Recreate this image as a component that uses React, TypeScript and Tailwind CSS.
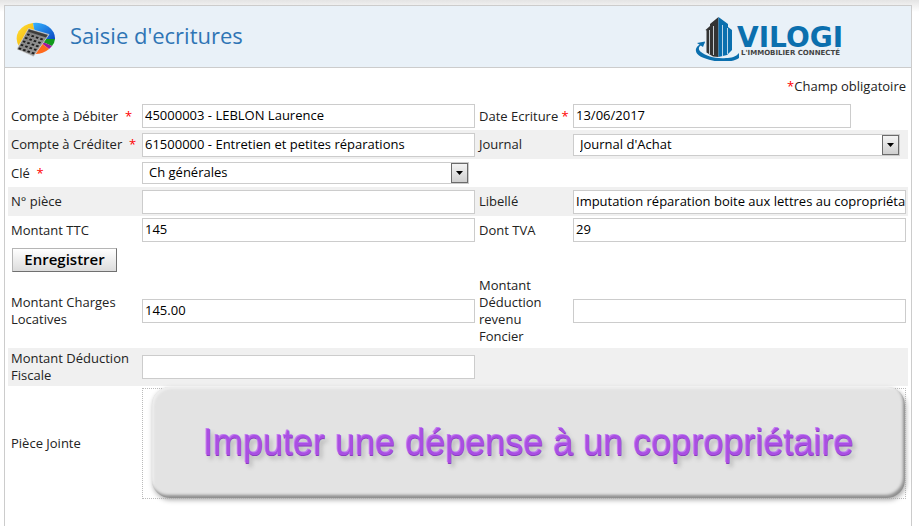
import type { ReactNode } from "react";

const field =
  "block w-full border border-[#cccccc] bg-white pl-[2px] pb-[2px] text-[13px] text-black outline-none";

function Star() {
  return <span className="text-[#ff0000]">*</span>;
}

function Row({ children, striped = false, className = "h-7" }: { children: ReactNode; striped?: boolean; className?: string }) {
  return (
    <div
      className={`grid grid-cols-[134px_minmax(0,1fr)_98px_minmax(0,1fr)] items-center pr-[2px] ${
        striped ? "bg-[#f0f0f0]" : ""
      } ${className}`}
    >
      {children}
    </div>
  );
}

function Label({ id, children, second = false }: { id: string; children: ReactNode; second?: boolean }) {
  return (
    <label htmlFor={id} className={`leading-[17px] text-[#222222] ${second ? "pl-1" : "pl-[3px]"}`}>
      {children}
    </label>
  );
}

function Text({ id, value = "", className = "h-6" }: { id: string; value?: string; className?: string }) {
  return <input id={id} type="text" defaultValue={value} className={`${field} ${className}`} />;
}

function Select({ id, value }: { id: string; value: string }) {
  return (
    <div className="relative mr-[6px]">
      <select
        id={id}
        className="block h-[22px] w-full appearance-none border border-[#cccccc] bg-white pb-[2px] pl-[6px] text-[13px] text-black outline-none"
      >
        <option>{value}</option>
      </select>
      <span className="pointer-events-none absolute top-px right-px flex h-5 w-[17px] items-center justify-center border border-[#6b6b6b] bg-linear-to-b from-[#f4f4f4] to-[#cfcfcf]">
        <svg width="7" height="4" viewBox="0 0 7 4">
          <path d="M0 0h7L3.5 4z" fill="#000" />
        </svg>
      </span>
    </div>
  );
}

function AccountingIcon() {
  const keys = [0, 1, 2, 3, 4].flatMap((r) => [0, 1, 2, 3].map((c) => [r, c]));
  return (
    <svg width="40" height="40" viewBox="0 -4 40 40" aria-hidden="true">
      <defs>
        <linearGradient id="yellow" x1="0" y1="0" x2="1" y2="1">
          <stop offset="0" stopColor="#ffe23a" />
          <stop offset="1" stopColor="#f2a900" />
        </linearGradient>
        <linearGradient id="blue" x1="0" y1="0" x2="1" y2="1">
          <stop offset="0" stopColor="#35b4ff" />
          <stop offset="1" stopColor="#0a49c4" />
        </linearGradient>
        <linearGradient id="body" x1="0" y1="0" x2="1" y2="1">
          <stop offset="0" stopColor="#666" />
          <stop offset="1" stopColor="#a5a5a5" />
        </linearGradient>
      </defs>
      <path d="M17 2A18.500 15.500 0 0 0 3 25L20 18z" fill="url(#yellow)" />
      <path d="M17 2A19 15.500 0 0 1 39 18L20 18z" fill="url(#blue)" />
      <path d="M39 18A19 15 0 0 1 36 25L20 18z" fill="#129a1c" />
      <path d="M36 25A19 15 0 0 1 33 28L20 18z" fill="#a1189c" />
      <path d="M33 28A19 15 0 0 1 18 33L20 18z" fill="#ff6a1c" />
      <path d="M12.500 7.500L33 13.500L17.500 35.500L1 28z" fill="url(#body)" stroke="#e2e2e2" strokeWidth="0.7" />
      <path d="M13 8.500L31.500 14L30 16.500L12 10.500z" fill="#3c3c3c" />
      {keys.map(([r, c]) => (
        <path
          key={`${r}-${c}`}
          d={`M${11.5 + c * 4.4 - r * 2.1} ${12 + c * 1.5 + r * 3.5}l3 1l-1.400 2.300l-3 -1z`}
          fill="#1c1c1c"
          stroke="#c8c8c8"
          strokeWidth="0.4"
        />
      ))}
    </svg>
  );
}

function Logo() {
  return (
    <svg width="156" height="48" viewBox="0 0 156 48" role="img" aria-label="Vilogi, l'immobilier connecté">
      <path d="M11.500 17L16 13V11L24.500 4V44L19 43.500L12.500 39.500V17.500z" fill="#333" />
      <path d="M24.500 4L34 11V14L38 17V37L33 42L24.500 44z" fill="#0b6fae" />
      <path d="M15.500 17v24M19.500 13v29" stroke="#e9f1f8" strokeWidth="0.8" />
      <path d="M28.500 12v31M33.500 15v26" stroke="#e9f1f8" strokeWidth="0.8" />
      <path d="M11 29C-1 33-1 41 10 45C22 50 38 50 45 45V40C42 44 37 45 32 45C22 46 12 43 7 39C3 36 5 32 10 31z" fill="#0b6fae" />
      <path d="M3 30L11 28.500L9 34z" fill="#0b6fae" />
      <text x="43" y="34" fontFamily="'DejaVu Sans', sans-serif" fontWeight="700" fontSize="28" fill="#0b6fae">
        VILOGI
      </text>
      <text x="47" y="42" fontFamily="'DejaVu Sans', sans-serif" fontWeight="700" fontSize="7" fill="#444">
        L'IMMOBILIER CONNECTÉ
      </text>
    </svg>
  );
}

export default function App() {
  return (
    <div className="flex min-h-screen flex-col bg-linear-to-b from-[#e4e4e4] to-white to-[12px] pt-[5px] pr-[7px] pl-1 font-['Open_Sans','Noto_Sans',sans-serif] text-[13px] text-[#222222]">
      <main className="flex-1 border border-b-0 border-[#cccccc] bg-white">
        <header className="flex h-[62px] items-center justify-between border-b border-[#cccccc] bg-[#e9f1f8] pr-[61px] pl-[11px]">
          <div className="flex items-center gap-[14px]">
            <AccountingIcon />
            <h1 className="pb-1 text-[22px] leading-7 text-[#2f75b5]">Saisie d'ecritures</h1>
          </div>
          <Logo />
        </header>

        <form className="px-[3px]" onSubmit={(e) => e.preventDefault()}>
          <p className="pt-2 pr-[2px] pb-[6px] text-right leading-5">
            <Star />
            Champ obligatoire
          </p>

          <Row>
            <Label id="debit">Compte à Débiter &nbsp;<Star /></Label>
            <Text id="debit" value="45000003 - LEBLON Laurence" />
            <Label id="date" second>Date Ecriture <Star /></Label>
            <div className="pr-[55px]">
              <Text id="date" value="13/06/2017" />
            </div>
          </Row>
          <Row striped className="h-[29px]">
            <Label id="credit">Compte à Créditer &nbsp;<Star /></Label>
            <Text id="credit" value="61500000 - Entretien et petites réparations" />
            <Label id="journal" second>Journal</Label>
            <Select id="journal" value="Journal d'Achat" />
          </Row>
          <Row>
            <Label id="key">Clé &nbsp;<Star /></Label>
            <Select id="key" value="Ch générales" />
          </Row>
          <Row striped className="h-[29px]">
            <Label id="piece">N° pièce</Label>
            <Text id="piece" />
            <Label id="libelle" second>Libellé</Label>
            <Text id="libelle" value="Imputation réparation boite aux lettres au copropriétaire" />
          </Row>
          <Row>
            <Label id="ttc">Montant TTC</Label>
            <Text id="ttc" value="145" />
            <Label id="tva" second>Dont TVA</Label>
            <Text id="tva" value="29" />
          </Row>

          <div className="px-1 py-1">
            <button
              type="submit"
              className="block h-6 w-[105px] border border-[#b5b5b5] border-r-[#707070] border-b-[#707070] bg-linear-to-b from-white to-[#dcdcdc] pb-[2px] text-[15px] leading-5 font-semibold text-black"
            >
              Enregistrer
            </button>
          </div>

          <Row className="py-px">
            <Label id="charges">Montant Charges Locatives</Label>
            <Text id="charges" value="145.00" />
            <Label id="foncier" second>
              Montant Déduction revenu
              <br />
              Foncier
            </Label>
            <Text id="foncier" />
          </Row>
          <Row striped className="mt-[2px] py-[2px]">
            <Label id="fiscale">Montant Déduction Fiscale</Label>
            <Text id="fiscale" />
          </Row>

          <div className="grid grid-cols-[134px_minmax(0,1fr)] items-center py-[2px] pr-[2px]">
            <span className="pl-[3px] leading-[17px]">Pièce Jointe</span>
            <div className="relative h-[111px] border border-dotted border-[#bbbbbb]">
              <div className="absolute -top-[2px] right-0 bottom-0 left-[9px] flex items-center justify-center rounded-[18px] bg-[#e3e3e3] shadow-[inset_-2px_-3px_3px_#8f8f8f,inset_2px_2px_2px_#eeeeee,1px_2px_5px_#aaaaaa]">
                <p className="font-['Liberation_Sans',sans-serif] text-[36px] leading-none whitespace-nowrap text-[#a94fe3] [text-shadow:-1px_-1px_0_#c07df0,0_1px_0_#8a3cc0,3px_4px_4px_#b5b5b5]">
                  Imputer une dépense à un copropriétaire
                </p>
              </div>
            </div>
          </div>
        </form>
      </main>
    </div>
  );
}
